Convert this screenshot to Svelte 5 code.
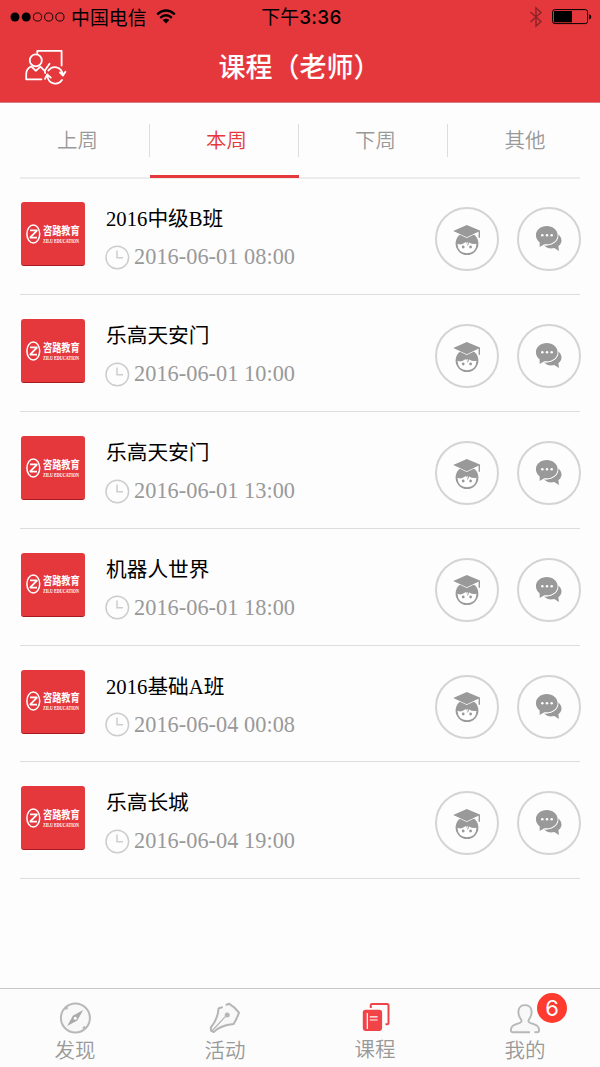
<script>
  const tabs = ['上周', '本周', '下周', '其他'];
  let active = $state(1);
  const lessons = [
    { name: '2016中级B班', time: '2016-06-01 08:00' },
    { name: '乐高天安门', time: '2016-06-01 10:00' },
    { name: '乐高天安门', time: '2016-06-01 13:00' },
    { name: '机器人世界', time: '2016-06-01 18:00' },
    { name: '2016基础A班', time: '2016-06-04 00:08' },
    { name: '乐高长城', time: '2016-06-04 19:00' }
  ];
</script>

<div class="screen">
  <header>
    <div class="status">
      <div class="carrier">
        <svg class="signal" width="56" height="12" viewBox="0 0 56 12">
          <circle cx="5" cy="6" r="4.5" />
          <circle cx="16.2" cy="6" r="4.5" />
          <g fill="none" stroke="#000" stroke-width=".9">
            <circle cx="27.5" cy="6" r="4.1" /><circle cx="38.7" cy="6" r="4.1" /><circle cx="49.9" cy="6" r="4.1" />
          </g>
        </svg>
        <span>中国电信</span>
        <svg class="wifi" width="20" height="15" viewBox="0 0 20 15">
          <g fill="none" stroke="#000" stroke-width="2.3">
            <path d="M1.2 5.3Q10-2.3 18.8 5.3" />
            <path d="M4.2 8.8Q10 3.7 15.8 8.8" />
          </g>
          <path d="M6.6 11.1Q10 8.5 13.4 11.1L10 14.5Z" />
        </svg>
      </div>
      <div class="clock">下午<b>3:36</b></div>
      <div class="power">
        <svg width="14" height="22" viewBox="0 0 14 22" fill="none" stroke="#8f2428" stroke-width="1.5">
          <path d="M1.5 6L12 15.5L7 20V2L12 6.5L1.5 16" />
        </svg>
        <svg width="40" height="16" viewBox="0 0 40 16">
          <rect x=".6" y=".6" width="35" height="14" rx="2.3" fill="none" stroke="#000" />
          <path d="M2 2h18v11.3H2z" />
          <path d="M37.2 5.2q2.1.5 2.1 2.6t-2.1 2.6z" />
        </svg>
      </div>
    </div>
    <div class="titlebar">
      <svg class="switch" width="42" height="36" viewBox="0 0 42 36" fill="none" stroke="#fff" stroke-width="1.8" stroke-linecap="round" stroke-linejoin="round">
        <path d="M12.3 4V1.8h24.3v14.7" />
        <circle cx="10.8" cy="11.4" r="6" />
        <path d="M6 17.5C2.5 19.3 1.2 21.5 1.2 25v5.3H16.5M6.5 17.6l4.3 4.2 4.6-4.2 4.3 4.2 4.8-7M19.8 21.8l.3 2.2" />
        <path d="M23.4 21.5c3.9-5.4 13-4.5 14.5 4.3M35 23.5l3 3.1 2.4-3.8M37 31c-4.3 6-13.3 4-14.6-3.7M20 29.8l2.2-4.4 3.6 3.2" />
      </svg>
      <h1>课程（老师）</h1>
    </div>
  </header>

  <nav class="tabs">
    {#each tabs as tab, i}
      <button class:active={active === i} onclick={() => (active = i)}><span>{tab}</span></button>
    {/each}
  </nav>

  <main>
    {#each lessons as lesson}
      <article>
        <div class="logo">
          <svg width="15" height="22" viewBox="0 0 15 22">
            <ellipse cx="7.3" cy="11" rx="6.4" ry="9.1" fill="none" stroke="#fff" stroke-width="1.5" />
            <path d="M4 7.3h7.2L4 14.6L11 14.6" fill="none" stroke="#fff" stroke-width="1.8" stroke-linejoin="bevel" />
          </svg>
          <div class="brand">
            <b>咨路教育</b>
            <small>ZILU EDUCATION</small>
          </div>
        </div>
        <div class="info">
          <h2>{lesson.name}</h2>
          <div class="time">
            <svg width="25" height="25" viewBox="0 0 25 25" fill="none" stroke="#cdcdcd" stroke-width="1.5">
              <circle cx="12.3" cy="12.5" r="11.3" /><path d="M12 5.5v7.3h6" />
            </svg>
            <span>{lesson.time}</span>
          </div>
        </div>
        <div class="action" role="button" tabindex="0" aria-label="学员">
          <svg class="student" width="28" height="32" viewBox="0 0 28 32">
            <circle cx="14" cy="18.6" r="11.4" fill="#999" />
            <path d="M4.5 18.8Q8.8 20.4 12 17.6L13.3 17L13.7 18.6L15 16.8L16.2 17.5Q19.5 19.6 23.5 18.8Q23 28.1 14 28.3Q5 28.1 4.5 18.8z" fill="#fff" />
            <path d="M15.8 16.8l-1.2 3.6" stroke="#999" stroke-width="1" />
            <circle cx="10.2" cy="22" r="1.4" fill="#999" /><circle cx="17.6" cy="22" r="1.4" fill="#999" />
            <path d="M13.8 0L27.5 5.8L13.8 12.3L.2 6z" fill="#999" stroke="#fff" stroke-width="1.2" paint-order="stroke" />
            <path d="M26.3 6v6.8" stroke="#999" stroke-width="1.4" />
          </svg>
        </div>
        <div class="action" role="button" tabindex="0" aria-label="消息">
          <svg width="28" height="28" viewBox="0 0 28 28">
            <path d="M23.2 9.2c4.4 3.9 4.4 8.8.2 11.9l.5 5-4.6-3q-6.1 1.6-10.4-2.5C17 21 22.9 16.5 23.2 9.2z" fill="#999" />
            <path d="M11.8 1C5.6 1 .9 5 .9 10.2c0 2.9 1.5 5.4 3.7 7l.1 4.7 4.6-2.7c7.4 1 13.3-3.3 13.3-9C22.6 5 17.9 1 11.8 1z" fill="#999" stroke="#fff" stroke-width="1.7" paint-order="stroke" />
            <g fill="#fff"><circle cx="7.3" cy="10.3" r="1.25" /><circle cx="12" cy="10.3" r="1.25" /><circle cx="16.7" cy="10.3" r="1.25" /></g>
          </svg>
        </div>
      </article>
    {/each}
  </main>

  <footer>
    <div class="item">
      <svg width="34" height="34" viewBox="0 0 34 34">
        <circle cx="17.4" cy="17" r="14.5" fill="#f8f8f8" stroke="#b8b8b8" stroke-width="2" />
        <path d="M25.2 9.1L19.3 19.5L9.2 25.1L14.8 14.8z" fill="#aaa" /><circle cx="17.3" cy="17.2" r="1.5" fill="#fff" />
        <path d="M7.4 8.3l2.1-2.1M25 27.8l2.2-2.2" stroke="#b8b8b8" stroke-width="2.2" />
      </svg>
      <span>发现</span>
    </div>
    <div class="item">
      <svg width="34" height="34" viewBox="0 0 34 34" fill="none" stroke="#b5b5b5" stroke-width="2" stroke-linecap="round" stroke-linejoin="round">
        <path d="M14 6.2L10.5 7.5Q10.3 17 2.8 26.7L3 29.6L5.7 31.1Q12 24.6 25.5 23.1Q28.8 18 31 11.6Q26.6 5.8 21.3 2.8L18.5 3.7" fill="#f8f8f8" />
        <path d="M4.4 29.5L18.5 14.3" stroke-width="1.2" /><circle cx="19.2" cy="13.9" r="1.5" fill="#b5b5b5" />
      </svg>
      <span>活动</span>
    </div>
    <div class="item course">
      <svg width="34" height="34" viewBox="0 0 34 34">
        <path d="M12.8 7V4Q12.8 3 14 3H29Q30.5 3 30.5 4.5V21.8Q30.5 23.3 29 23.3H27.5" fill="none" stroke="#f14448" stroke-width="2" />
        <rect x="4.8" y="8.7" width="19.3" height="21.2" rx="2.8" fill="#f14448" />
        <path d="M9.3 12v16M11.8 15.8h7.8M11.8 19h7.8" stroke="#fff" stroke-width="1.2" />
      </svg>
      <span>课程</span>
    </div>
    <div class="item mine">
      <svg width="34" height="34" viewBox="0 0 34 34">
        <path d="M22 31.3H4.8Q2.8 31.3 2.9 29C3 24.8 6 23.7 11.8 21.8C14 21 13.8 19.8 13 18.4C8.6 12.5 9.7 4.1 17 4.1S25.4 12.5 21 18.4C20.2 19.8 20 21 22.2 21.8C28 23.7 31 24.8 31.1 29Q31.2 31.3 29.2 31.3H26.5" fill="#f8f8f8" stroke="#b8b8b8" stroke-width="1.9" />
      </svg>
      <i class="badge">6</i>
      <span>我的</span>
    </div>
  </footer>
</div>

<style>
  :global(body) { margin: 0; background: #fdfdfd; }
  * { box-sizing: border-box; }
  .screen { width: 600px; height: 1067px; display: flex; flex-direction: column; font-family: "Noto Sans CJK SC", sans-serif; overflow: hidden; background: #fdfdfd; }
  svg { display: block; flex: none; }
  header { height: 103px; background: #e5383d; border-bottom: 1px solid #d87b81; flex: none; }
  .status { height: 33px; display: grid; grid-template-columns: 1fr auto 1fr; align-items: center; padding: 0 8px 0 10px; font-size: 18.9px; line-height: 31px; color: #000; }
  .carrier, .clock { height: 33px; }
  .carrier { display: flex; align-items: center; }
  .carrier span { margin-left: 5px; margin-top: -1px; }
  .wifi { margin-left: 9px; margin-top: -1px; }
  .clock { margin-left: 1px; }
  .clock b { font-family: Inter, sans-serif; font-weight: 500; font-size: 18.9px; letter-spacing: .3px; }
  .power { display: flex; justify-content: flex-end; align-items: center; gap: 9px; }
  .titlebar { height: 69px; display: grid; grid-template-columns: 42px 1fr 42px; padding: 0 25px; align-items: center; }
  .switch { margin-top: -1px; }
  h1 { margin: -3px 0 0 -1px; color: #fff; font-size: 27px; font-weight: 500; line-height: 66px; text-align: center; white-space: nowrap; }
  .tabs { height: 76px; flex: none; display: grid; grid-template-columns: 149px 149px 149px 1fr; margin-left: 1px; background: linear-gradient(#ececec, #ececec) 19px 74px / 560px 2px no-repeat; }
  button { appearance: none; height: 75px; border: 0; border-bottom: 3px solid transparent; margin: 0; padding: 0; background: none; font: 350 20.5px/31px "Noto Sans CJK SC", sans-serif; color: #999; display: flex; align-items: flex-start; }
  button span { display: block; width: 100%; height: 33px; margin-top: 21px; border-right: 1px solid #ddd; text-align: center; padding-left: 5px; }
  button:last-child span { border: 0; padding-left: 2px; }
  button.active { color: #e5383d; border-color: #e5383d; }
  main { flex: 1; padding: 0 19px 0 20px; margin-top: -.6px; }
  article { height: 116.8px; display: flex; align-items: flex-start; border-bottom: 1px solid #ddd; margin-right: 1px; padding: 24px 0 0 1px; }
  .logo { width: 64px; height: 64px; border-radius: 3px; background: #e5383d; border-bottom: 1px solid #a61b20; display: flex; align-items: center; padding-left: 5px; color: #fff; }
  .brand { width: 37px; margin-left: 2px; margin-top: 1px; white-space: nowrap; }
  .brand b { display: block; font-size: 9.2px; line-height: 13px; font-weight: 700; transform: scaleY(1.25); }
  .brand small { display: block; font: 700 5.5px/8px "Liberation Serif", serif; width: 50px; transform: scaleX(.75); transform-origin: left; }
  .info { flex: 1; margin-left: 21px; }
  h2 { margin: 2px 0 0; font: 400 20.7px/30px "Liberation Serif", "Noto Sans CJK SC", serif; color: #000; }
  .time { display: flex; align-items: center; height: 26px; margin-top: 10px; font: 22.3px/26px "Liberation Serif", serif; color: #999; }
  .time span { margin-left: 3px; letter-spacing: .04px; }
  .time svg { margin-left: -1px; margin-right: 1px; }
  .action { width: 64px; height: 64px; border: 2px solid #d4d4d4; border-radius: 50%; margin: 5px -1px 0 19px; display: grid; place-items: center; }
  .student { margin-top: 3px; }
  footer { height: 79px; flex: none; border-top: 1px solid #c8c8c8; display: grid; grid-template-columns: repeat(4, 1fr); background: #fcfcfc; }
  .item { position: relative; display: flex; flex-direction: column; align-items: center; padding-top: 12px; color: #999; font-size: 20.5px; font-weight: 350; line-height: 30px; }
  .item span { margin-top: -1px; }
  .course span { margin-top: -2px; }
  .badge { position: absolute; left: 87px; top: 4px; width: 30px; height: 30px; border-radius: 50%; background: #ff3b30; color: #fff; font: 400 22px/30px Inter, sans-serif; text-align: center; }
</style>
